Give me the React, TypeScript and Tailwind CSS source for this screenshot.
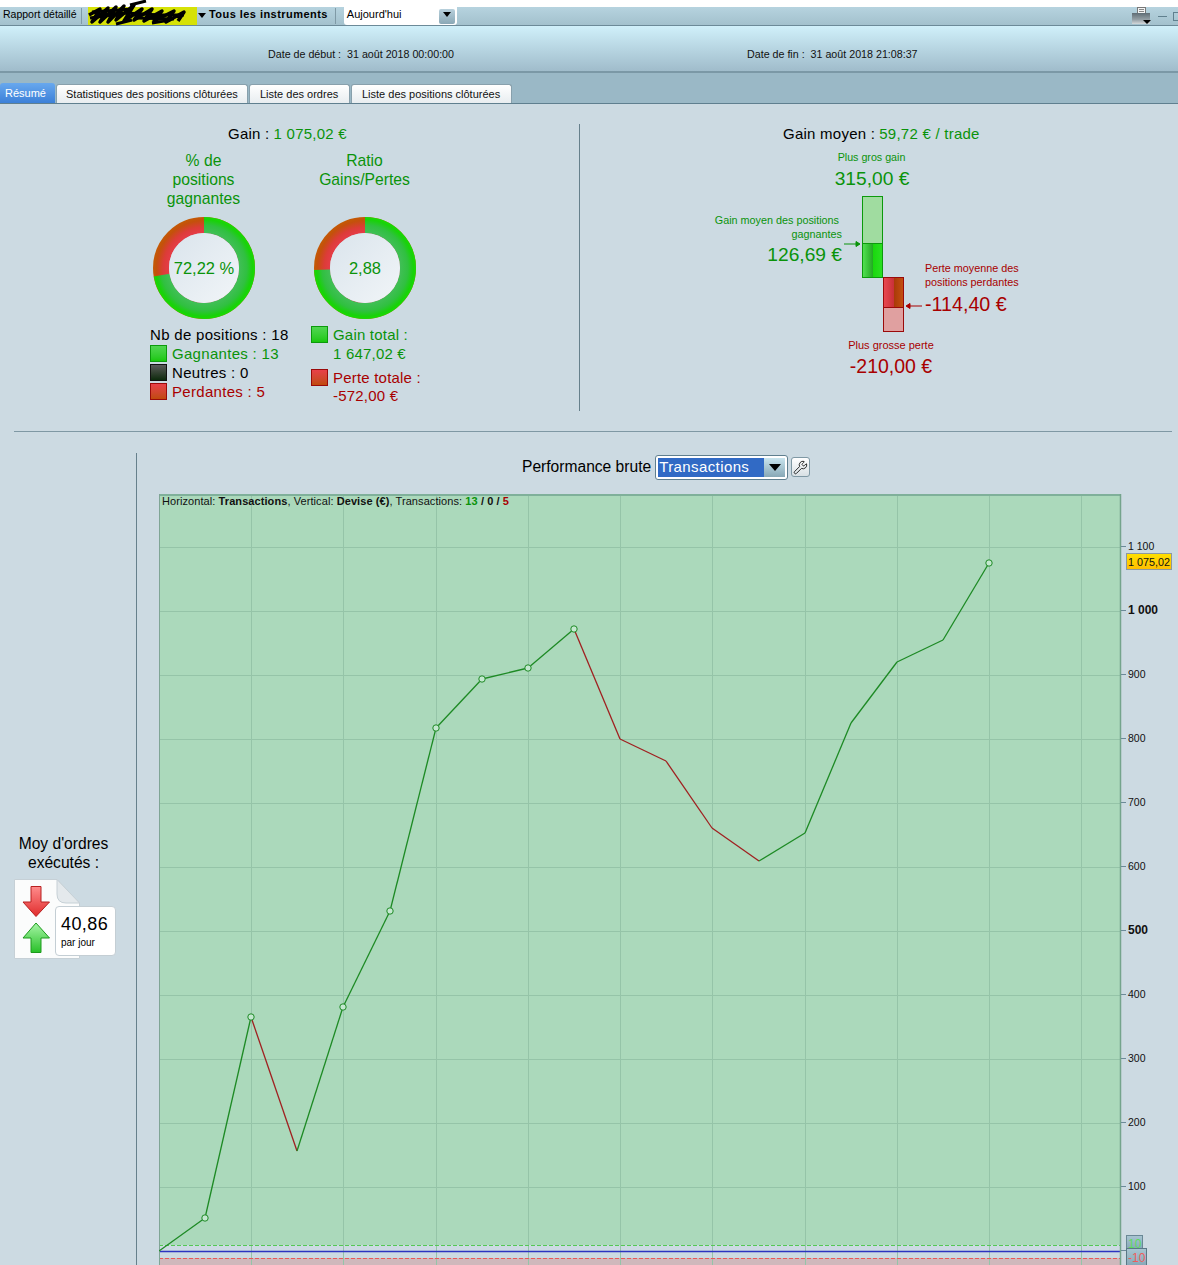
import { Wrench } from "lucide-react";

const font = { fontFamily: '"Liberation Sans", Arial, sans-serif' };

const points: [number, number][] = [
  [159, 1251], [205, 1218], [251, 1017], [297, 1151], [343, 1007], [390, 911], [436, 728],
  [482, 679], [528, 668], [574, 629], [620, 739], [666, 761], [712, 828], [759, 861],
  [805, 833], [851, 723], [897, 662], [943, 640], [989, 563],
];
const dots = [205, 251, 343, 390, 436, 482, 528, 574, 989];
const axis = [
  { y: 547, label: "1 100" }, { y: 611, label: "1 000", bold: true }, { y: 675, label: "900" },
  { y: 739, label: "800" }, { y: 803, label: "700" }, { y: 867, label: "600" },
  { y: 931, label: "500", bold: true }, { y: 995, label: "400" }, { y: 1059, label: "300" },
  { y: 1123, label: "200" }, { y: 1187, label: "100" },
];
const verticals = [251, 343, 436, 528, 620, 712, 805, 897, 989, 1081];

function Donut({ id, green, label }: { id: string; green: number; label: string }) {
  const r = 43;
  const c = 2 * Math.PI * r;
  return (
    <div className="relative ml-[3px] h-[102px] w-[102px]">
      <svg width="102" height="102" viewBox="0 0 102 102">
        <defs>
          <radialGradient id={id + "g"} gradientUnits="userSpaceOnUse" cx="51" cy="51" r="51">
            <stop offset="0.68" stopColor="#42bf58" />
            <stop offset="0.84" stopColor="#30c040" />
            <stop offset="0.95" stopColor="#18d208" />
            <stop offset="1" stopColor="#18dc04" />
          </radialGradient>
          <radialGradient id={id + "r"} gradientUnits="userSpaceOnUse" cx="51" cy="51" r="51">
            <stop offset="0.68" stopColor="#e63c48" />
            <stop offset="0.8" stopColor="#dc3c38" />
            <stop offset="0.93" stopColor="#c4500c" />
            <stop offset="1" stopColor="#c45a04" />
          </radialGradient>
          <linearGradient id={id + "c"} x1="0" y1="0" x2="1" y2="1">
            <stop offset="0" stopColor="#dae4ec" />
            <stop offset="1" stopColor="#f1f5f8" />
          </linearGradient>
        </defs>
        <g transform="rotate(-90 51 51)">
          <circle cx="51" cy="51" r={r} fill="none" stroke={`url(#${id}r)`} strokeWidth="16" />
          <circle
            cx="51"
            cy="51"
            r={r}
            fill="none"
            stroke={`url(#${id}g)`}
            strokeWidth="16"
            strokeDasharray={`${(c * green) / 100} ${c}`}
          />
        </g>
        <circle cx="51" cy="51" r="35" fill={`url(#${id}c)`} />
      </svg>
      <div className="absolute inset-0 flex items-center justify-center text-[16.5px] text-[#0a930a]">{label}</div>
    </div>
  );
}

function Swatch({ color }: { color: "green" | "black" | "red" }) {
  const cls = {
    green: "border-[#0c9a0c] bg-gradient-to-b from-[#4fd64f] to-[#18c808]",
    black: "border-[#111] bg-gradient-to-b from-[#5a5a5a] to-[#0c2a0c]",
    red: "border-[#9a0a0a] bg-gradient-to-b from-[#e84048] to-[#c04a08]",
  }[color];
  return <span className={`inline-block h-[17px] w-[17px] shrink-0 border ${cls}`} />;
}

function Caret({ w = 8, h = 5 }: { w?: number; h?: number }) {
  return (
    <svg width={w} height={h} viewBox="0 0 8 5" preserveAspectRatio="none">
      <path d="M0 0 H8 L4 5z" fill="#000" />
    </svg>
  );
}

function TopBar() {
  return (
    <div className="relative flex h-[19px] items-center border-b border-[#6c8a98] bg-gradient-to-b from-[#b6d3df] to-[#a3c1cd] text-[11px] text-black">
      <span className="ml-[3px] w-[78px] pb-[3px] text-[10.5px]">Rapport détaillé</span>
      <span className="h-[16px] w-px bg-[#7f9aa6]" />
      <div className="ml-[6px] h-[18px] w-[109px] bg-[#d6e206]" />
      <span className="ml-[1px] pb-[2px]"><Caret /></span>
      <span className="ml-[3px] pb-[3px] font-bold tracking-[0.45px]">Tous les instruments</span>
      <span className="ml-[7px] h-[16px] w-px bg-[#7f9aa6]" />
      <div className="ml-[8px] flex h-[18px] w-[113px] items-center justify-between rounded-b-[3px] bg-white pl-[3px] pr-[2px]">
        <span className="pb-[3px]">Aujourd'hui</span>
        <span className="flex h-[15px] w-[16px] items-center justify-center rounded-[2px] bg-gradient-to-b from-[#b8d0dc] to-[#8aa8b6] pb-[3px]"><Caret /></span>
      </div>
      {/* masked account name */}
      <svg className="absolute left-[86px] top-[-7px]" width="106" height="30" viewBox="0 0 106 30">
        <path
          d="M3 15 L14 9 L6 22 L22 8 L14 22 L30 7 L22 22 L38 6 L30 20 L48 5 L38 21 L56 9 L48 20 L66 9 L58 21 L76 11 L68 21 L88 11 L80 22 L98 12 L92 21"
          fill="none"
          stroke="#000"
          strokeWidth="3.5"
          strokeLinejoin="round"
        />
        <path d="M4 18 L40 13 L74 15 L98 15 M6 12 L46 9 M50 18 L88 19 M44 5 L60 1 M30 24 L46 20 M66 23 L84 20" fill="none" stroke="#000" strokeWidth="3" />
      </svg>
      <div className="ml-auto flex items-center gap-[6px]">
        <svg width="21" height="18" viewBox="0 0 21 18">
          <defs>
            <linearGradient id="pr" x1="0" y1="0" x2="0" y2="1">
              <stop offset="0" stopColor="#5f6d75" />
              <stop offset="0.6" stopColor="#95a0a6" />
              <stop offset="1" stopColor="#d4d8da" />
            </linearGradient>
          </defs>
          <rect x="6.5" y="0.5" width="8" height="6" fill="#f4f4f4" stroke="#777" />
          <path d="M8 2.5 h5 M8 4.5 h5" stroke="#888" />
          <rect x="1" y="6" width="18" height="11" fill="url(#pr)" />
          <path d="M12 13 h8 l-4 4z" fill="#000" />
        </svg>
        <span className="h-[1px] w-[9px] bg-[#60808e]" />
        <span className="mr-[-4px] h-[9px] w-[9px] border border-[#60808e]" />
      </div>
    </div>
  );
}

function Tabs() {
  const tab = "flex h-[19px] items-center rounded-t-[3px] border border-b-0 border-[#88a0ac] bg-gradient-to-b from-white to-[#e8edf0] text-[#111]";
  return (
    <div className="flex h-[31px] items-end border-b border-[#5f7f8f] bg-[#9ab8c6] text-[11px]">
      <div className="flex h-[20px] w-[55px] items-center rounded-t-[3px] bg-gradient-to-b from-[#68a8ee] to-[#3c80d8] pl-[5px] text-white">Résumé</div>
      <div className={`${tab} ml-px w-[192px] pl-[9px]`}>Statistiques des positions clôturées</div>
      <div className={`${tab} ml-[1px] w-[101px] pl-[10px]`}>Liste des ordres</div>
      <div className={`${tab} ml-[1px] w-[161px] pl-[10px]`}>Liste des positions clôturées</div>
    </div>
  );
}

function LeftSummary() {
  return (
    <div className="h-[287px] w-[580px] border-r border-[#66808c]">
      <div className="ml-[228px] flex gap-[4px] text-[15px] leading-[20px] tracking-[0.25px]">
        <span>Gain :</span>
        <span className="text-[#0a930a]">1 075,02 €</span>
      </div>
      <div className="ml-[150px] mt-[7px] flex gap-[56px]">
        <div className="w-[105px]">
          <div className="h-[66px] pl-[2px] text-center text-[15.7px] leading-[19px] text-[#0a930a]">
            % de<br />positions<br />gagnantes
          </div>
          <Donut id="a" green={72.22} label="72,22 %" />
        </div>
        <div className="w-[105px]">
          <div className="h-[66px] pl-[2px] text-center text-[15.7px] leading-[19px] text-[#0a930a]">
            Ratio<br />Gains/Pertes
          </div>
          <Donut id="b" green={74.2} label="2,88" />
        </div>
      </div>
      <div className="ml-[150px] mt-[5px] flex text-[15px] tracking-[0.3px]">
        <div className="mt-[1px] w-[161px] leading-[19px]">
          <div>Nb de positions : 18</div>
          <div className="flex items-center gap-[5px] text-[#0a930a]"><Swatch color="green" />Gagnantes : 13</div>
          <div className="flex items-center gap-[5px]"><Swatch color="black" />Neutres : 0</div>
          <div className="flex items-center gap-[5px] text-[#a80000]"><Swatch color="red" />Perdantes : 5</div>
        </div>
        <div className="mt-[1px] leading-[19px] tracking-[0.2px]">
          <div className="flex items-center gap-[5px] text-[#0a930a]"><Swatch color="green" />Gain total :</div>
          <div className="pl-[22px] text-[#0a930a]">1 647,02 €</div>
          <div className="mt-[5px] flex items-center gap-[5px] text-[#a80000]"><Swatch color="red" />Perte totale :</div>
          <div className="pl-[22px] leading-[18px] text-[#a80000]">-572,00 €</div>
        </div>
      </div>
    </div>
  );
}

function RightSummary() {
  return (
    <div className="flex-1">
      <div className="ml-[203px] flex gap-[4px] text-[15px] leading-[20px] tracking-[0.25px]">
        <span>Gain moyen :</span>
        <span className="text-[#0a930a]">59,72 € / trade</span>
      </div>
      <div className="ml-[212px] w-[160px] text-center text-[#0a930a]">
        <div className="mt-[6px] pr-[1px] text-[10.7px] leading-[14px]">Plus gros gain</div>
        <div className="mt-[3px] text-[19.2px] leading-[24px]">315,00 €</div>
      </div>
      <div className="mt-[5px] flex">
        <div className="w-[282px] pt-[17px] text-right text-[#0a930a]">
          <div className="text-[10.8px] leading-[14px]">
            <div className="pr-[23px]">Gain moyen des positions</div>
            <div className="pr-[20px]">gagnantes</div>
          </div>
          <div className="pr-[20px] text-[19.2px] leading-[28px]">126,69 €</div>
        </div>
        <div className="relative flex w-[42px]">
          <svg className="absolute left-[-18px] top-[45px]" width="18" height="6" viewBox="0 0 18 6">
            <path d="M0 3 H15 M12 0.5 L16 3 L12 5.5z" stroke="#0a930a" fill="#0a930a" />
          </svg>
          <div className="h-[82px] w-[21px]">
            <div className="h-[48px] border border-[#0c9a0c] bg-[#a0dca0]" />
            <div className="flex h-[34px] border border-t-0 border-[#0c9a0c]">
              <span className="w-1/2 bg-gradient-to-r from-[#50e050] to-[#22a822]" />
              <span className="w-1/2 bg-gradient-to-r from-[#18d80c] to-[#2ae020]" />
            </div>
          </div>
          <div className="mt-[81px] h-[55px] w-[21px]">
            <div className="flex h-[30px] border border-b-0 border-[#9a0a0a]">
              <span className="w-1/2 bg-gradient-to-r from-[#e84850] to-[#c83038]" />
              <span className="w-1/2 bg-gradient-to-r from-[#a83a08] to-[#c44e10]" />
            </div>
            <div className="h-[25px] border border-[#9a0a0a] bg-[#e0a0a0]" />
          </div>
          <svg className="absolute left-[42px] top-[107px]" width="18" height="6" viewBox="0 0 18 6">
            <path d="M18 3 H3 M6 0.5 L2 3 L6 5.5z" stroke="#a80000" fill="#a80000" />
          </svg>
        </div>
        <div className="ml-[21px] pt-[65px] text-[#a80000]">
          <div className="text-[10.8px] leading-[14px]">
            Perte moyenne des<br />positions perdantes
          </div>
          <div className="text-[19.7px] leading-[30px]">-114,40 €</div>
        </div>
      </div>
      <div className="ml-[231px] w-[160px] text-center text-[#a80000]">
        <div className="mt-[6px] text-[11px] leading-[14px]">Plus grosse perte</div>
        <div className="mt-[2px] text-[19.5px] leading-[24px]">-210,00 €</div>
      </div>
    </div>
  );
}

function OrdersCard() {
  return (
    <div className="pt-[381px] text-center">
      <div className="pr-[9px] text-[15.6px] leading-[19px]">
        Moy d'ordres<br />exécutés :
      </div>
      <div className="relative ml-[14px] mt-[7px] h-[80px] w-[102px]">
        <svg width="66" height="80" viewBox="0 0 66 80">
          <defs>
            <linearGradient id="dn" x1="0" y1="0" x2="0" y2="1">
              <stop offset="0" stopColor="#ff8c8c" />
              <stop offset="1" stopColor="#e02c2c" />
            </linearGradient>
            <linearGradient id="up" x1="0" y1="0" x2="0" y2="1">
              <stop offset="0" stopColor="#a8f5a8" />
              <stop offset="1" stopColor="#28c028" />
            </linearGradient>
          </defs>
          <path d="M0.5 0.5 H43 L65.5 24 V79.5 H0.5z" fill="#fbfcfc" stroke="#c6d0d6" />
          <path d="M43 0.5 V15 Q43 24 52 24 H65.5z" fill="#e4e9ec" stroke="#c6d0d6" />
          <path d="M17 7.5 H27 V23 H35.5 L22 37.5 L9 23 H17z" fill="url(#dn)" stroke="#b82020" />
          <path d="M22 44 L35.5 59 H27 V73.5 H17 V59 H9z" fill="url(#up)" stroke="#1c9a1c" />
        </svg>
        <div className="absolute left-[41px] top-[27px] h-[50px] w-[61px] rounded-[4px] border border-[#c4ced4] bg-white pl-[5px] text-left">
          <div className="mt-[5px] text-[18px] leading-[24px] tracking-[0.4px]">40,86</div>
          <div className="mt-[1px] text-[10px] leading-[12px]">par jour</div>
        </div>
      </div>
    </div>
  );
}

function Chart() {
  return (
    <svg width="1019" height="771" viewBox="159 494 1019 771" className="block" style={font}>
      <defs>
        <linearGradient id="gold" x1="0" y1="0" x2="0" y2="1">
          <stop offset="0" stopColor="#ffe000" />
          <stop offset="1" stopColor="#ffbe00" />
        </linearGradient>
        <linearGradient id="tag" x1="0" y1="0" x2="0" y2="1">
          <stop offset="0" stopColor="#a8c6d2" />
          <stop offset="1" stopColor="#88a8b8" />
        </linearGradient>
      </defs>
      <rect x="159" y="494" width="962" height="751" fill="#abd9bb" />
      <rect x="159" y="1258" width="962" height="7" fill="#d0b8bc" />
      {axis.map((a) => (
        <line key={a.y} x1="159" x2="1121" y1={a.y + 0.5} y2={a.y + 0.5} stroke="#95c4a8" />
      ))}
      {verticals.map((x) => (
        <line key={x} x1={x + 0.5} x2={x + 0.5} y1="494" y2="1265" stroke="#95c4a8" />
      ))}
      <line x1="159" x2="1121" y1="1245.5" y2="1245.5" stroke="#55c855" strokeDasharray="4 2" />
      <line x1="159" x2="1121" y1="1258.5" y2="1258.5" stroke="#e85858" strokeDasharray="4 2" />
      <line x1="159" x2="1121" y1="1251.5" y2="1251.5" stroke="#2c34c0" strokeWidth="1.4" />
      <line x1="159" x2="1121" y1="495" y2="495" stroke="#7fb09a" strokeWidth="2" />
      <line x1="159.5" x2="159.5" y1="494" y2="1265" stroke="#7fa595" />
      <line x1="1120.5" x2="1120.5" y1="494" y2="1265" stroke="#74a48c" strokeWidth="1.5" />
      {points.slice(1).map((p, i) => {
        const prev = points[i];
        return (
          <line
            key={p[0]}
            x1={prev[0]}
            y1={prev[1]}
            x2={p[0]}
            y2={p[1]}
            stroke={p[1] > prev[1] ? "#a02020" : "#1d8a24"}
            strokeWidth="1.3"
          />
        );
      })}
      {dots.map((x) => {
        const p = points.find((q) => q[0] === x)!;
        return <circle key={x} cx={p[0]} cy={p[1]} r="3.2" fill="#c4e8d0" stroke="#1d8a24" />;
      })}
      <text x="162" y="505" fontSize="11" letterSpacing="0.08" fill="#111">
        Horizontal: <tspan fontWeight="bold">Transactions</tspan>, Vertical: <tspan fontWeight="bold">Devise (€)</tspan>, Transactions:{" "}
        <tspan fontWeight="bold" fill="#0a930a">13</tspan> <tspan fontWeight="bold">/ 0 /</tspan>{" "}
        <tspan fontWeight="bold" fill="#a80000">5</tspan>
      </text>
      {axis.map((a) => (
        <g key={a.label}>
          <line x1="1121" x2="1126" y1={a.y - 0.5} y2={a.y - 0.5} stroke="#6c8a98" />
          <text x="1128" y={a.y + 3} fontSize={a.bold ? 12 : 10.5} fontWeight={a.bold ? "bold" : "normal"} fill="#111">
            {a.label}
          </text>
        </g>
      ))}
      <rect x="1126.5" y="553.5" width="45" height="16" fill="url(#gold)" stroke="#8c98a0" />
      <text x="1128" y="566" fontSize="10.8" fill="#111">1 075,02</text>
      <line x1="1121" x2="1126" y1="1250.5" y2="1250.5" stroke="#6c8a98" />
      <rect x="1126.5" y="1235.5" width="16" height="13" fill="url(#tag)" stroke="#6a8896" />
      <text x="1128" y="1248" fontSize="12" fill="#5cdc5c">10</text>
      <rect x="1126.5" y="1248.5" width="20" height="17" fill="url(#tag)" stroke="#5a7886" />
      <text x="1128" y="1262" fontSize="12" fill="#ee5c5c">-10</text>
    </svg>
  );
}

export default function App() {
  return (
    <div className="h-[1265px] w-[1178px] overflow-hidden bg-[#ccdae2] text-black" style={font}>
      <div className="h-[7px] bg-white" />
      <TopBar />
      <div className="flex h-[47px] items-center border-b-2 border-[#7b98a6] bg-gradient-to-b from-[#d0f0fa] to-[#a0bccb] pt-[12px] text-[10.7px] text-[#111]">
        <span className="ml-[268px] w-[479px]">Date de début :&nbsp; 31 août 2018 00:00:00</span>
        <span>Date de fin :&nbsp; 31 août 2018 21:08:37</span>
      </div>
      <Tabs />
      <div className="flex pt-[20px]">
        <LeftSummary />
        <RightSummary />
      </div>
      <div className="ml-[14px] mt-[20px] h-px w-[1158px] bg-[#7f98a4]" />
      <div className="mt-[21px] flex">
        <div className="h-[812px] w-[137px] shrink-0 border-r border-[#66808c]">
          <OrdersCard />
        </div>
        <div className="flex-1">
          <div className="mt-[1px] flex h-[26px] items-center pl-[385px] text-[15.6px]">
            <span>Performance brute</span>
            <div className="ml-[4px] flex h-[25px] w-[133px] items-center rounded-[3px] border border-[#5f7f8f] bg-white p-[2px]">
              <span className="flex h-[19px] w-[107px] items-center bg-[#316ac5] pl-[1px] text-[15px] tracking-[0.4px] text-white">Transactions</span>
              <span className="flex h-[19px] w-[21px] items-center justify-center bg-gradient-to-b from-[#c8e4ee] to-[#88a8b6]"><Caret w={12} h={7} /></span>
            </div>
            <span className="ml-[3px] flex h-[20px] w-[19px] items-center justify-center rounded-[3px] border border-[#7f98a4] bg-gradient-to-b from-white to-[#d8e0e4]">
              <Wrench size={15} strokeWidth={1.3} />
            </span>
          </div>
          <div className="ml-[22px] mt-[14px]">
            <Chart />
          </div>
        </div>
      </div>
    </div>
  );
}
